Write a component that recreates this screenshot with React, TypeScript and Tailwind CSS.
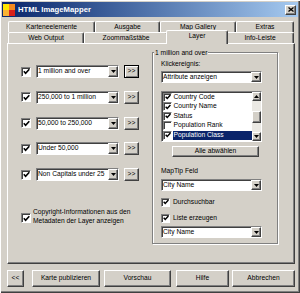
import React from "react";

const raised =
  "border border-t-white border-l-white border-r-[#404040] border-b-[#404040] shadow-[inset_-1px_-1px_0_#808080]";
const sunken =
  "border border-t-[#808080] border-l-[#808080] border-r-white border-b-white shadow-[inset_1px_1px_0_#404040]";

function CheckMark() {
  return (
    <svg width="7" height="7" viewBox="0 0 7 7">
      <path d="M0.8 3.2 L2.6 5.2 L6.3 1.2" stroke="black" strokeWidth="1.6" fill="none" />
    </svg>
  );
}

function Check({ checked = true, className = "" }: { checked?: boolean; className?: string }) {
  return (
    <div className={`w-[10px] h-[10px] shrink-0 bg-white ${sunken} flex items-center justify-center ${className}`}>
      {checked && <CheckMark />}
    </div>
  );
}

function SmallCheck({ checked = true }: { checked?: boolean }) {
  return (
    <div className={`w-[9px] h-[9px] shrink-0 bg-white ${sunken} flex items-center justify-center`}>
      {checked && (
        <svg width="6" height="6" viewBox="0 0 7 7">
          <path d="M0.8 3.2 L2.6 5.2 L6.3 1.2" stroke="black" strokeWidth="1.7" fill="none" />
        </svg>
      )}
    </div>
  );
}

function DownArrow() {
  return (
    <svg width="5" height="3" viewBox="0 0 5 3">
      <path d="M0 0h5L2.5 3z" fill="black" />
    </svg>
  );
}

function UpArrow() {
  return (
    <svg width="5" height="3" viewBox="0 0 5 3">
      <path d="M0 3h5L2.5 0z" fill="black" />
    </svg>
  );
}

function Combo({ text, className = "" }: { text: string; className?: string }) {
  return (
    <div className={`flex items-stretch bg-white ${sunken} ${className}`}>
      <div className="flex-1 min-w-0 flex items-center pl-[1px] overflow-hidden whitespace-nowrap leading-none">
        {text}
      </div>
      <div className={`w-[10px] shrink-0 bg-[#d4d0c8] ${raised} flex items-center justify-center`}>
        <DownArrow />
      </div>
    </div>
  );
}

function Btn({ children, className = "" }: { children: React.ReactNode; className?: string }) {
  return (
    <div className={`flex items-center justify-center bg-[#d4d0c8] leading-none whitespace-nowrap ${raised} ${className}`}>
      {children}
    </div>
  );
}

function Tab({ label, className = "", selected = false }: { label: string; className?: string; selected?: boolean }) {
  return (
    <div
      className={`flex items-center justify-center leading-none whitespace-nowrap bg-[#d4d0c8] border-t border-l border-r border-t-white border-l-white border-r-[#404040] rounded-t-[2px] shadow-[inset_-1px_0_0_#808080] ${
        selected ? "relative z-10 -mt-[2px] -mx-[2px] h-[14px] pb-[2px]" : "h-full"
      } ${className}`}
    >
      {label}
    </div>
  );
}

const rows = ["1 million and over", "250,000 to 1 million", "50,000 to 250,000", "Under 50,000", "Non Capitals under 25"];

const listItems = [
  { t: "Country Code", c: true },
  { t: "Country Name", c: true },
  { t: "Status", c: true },
  { t: "Population Rank", c: false },
  { t: "Population Class", c: true, sel: true },
];

export default function App() {
  return (
    <div className="w-[300px] h-[293px] bg-[#d4d0c8] text-black text-[6.7px] font-['Liberation_Sans',Arial,sans-serif] shadow-[inset_1px_1px_0_#fff,inset_-1px_-1px_0_#404040,inset_-2px_-2px_0_#808080] overflow-hidden pt-[2px]">
      {/* Title bar */}
      <div className="mx-[2px] h-[15px] bg-linear-to-r from-[#0a246a] to-[#a6caf0] flex items-center">
        <svg width="12" height="12" viewBox="0 0 12 12" className="ml-[1px] shrink-0">
          <rect x="0" y="0" width="12" height="12" fill="#e8401c" />
          <rect x="0" y="0" width="6" height="6" fill="#ffe600" />
          <rect x="6" y="0" width="6" height="6" fill="#f58a1f" />
          <rect x="0" y="6" width="6" height="6" fill="#f9b233" />
          <rect x="6" y="6" width="6" height="6" fill="#d8201a" />
        </svg>
        <span className="ml-[3px] text-white font-bold text-[7.7px] leading-none">HTML ImageMapper</span>
        <div className="flex-1" />
        <div className={`mr-[2px] w-[11px] h-[10px] bg-[#d4d0c8] ${raised} flex items-center justify-center`}>
          <svg width="6" height="5" viewBox="0 0 6 5">
            <path d="M0.5 0.5 L5.5 4.5 M5.5 0.5 L0.5 4.5" stroke="black" strokeWidth="1.3" />
          </svg>
        </div>
      </div>

      {/* Tabs row 1 */}
      <div className="mt-[4px] ml-[8px] h-[11px] flex">
        <Tab label="Karteneelemente" className="w-[87px]" />
        <Tab label="Ausgabe" className="w-[65px]" />
        <Tab label="Map Gallery" className="w-[76px]" />
        <Tab label="Extras" className="w-[58px]" />
      </div>
      {/* Tabs row 2 */}
      <div className="ml-[8px] h-[11px] flex">
        <Tab label="Web Output" className="w-[76px]" />
        <Tab label="Zoommaßstäbe" className="w-[84px]" />
        <Tab label="Layer" selected className="w-[62px]" />
        <Tab label="Info-Leiste" className="w-[68px]" />
      </div>

      {/* Panel */}
      <div className={`ml-[7px] w-[288px] h-[221px] ${raised} flex`}>
        {/* Left column */}
        <div className="w-[144px] shrink-0 pl-[13px] pt-[21px] flex flex-col">
          <div className="flex flex-col gap-[12.75px]">
            {rows.map((r, i) => (
              <div key={i} className="flex items-center h-[13px]">
                <Check />
                <Combo text={r} className="ml-[5px] w-[83px] h-[13px]" />
                {i === 0 ? (
                  <div className="ml-[5px] w-[15px] h-[13px] flex items-center justify-center leading-none border border-black shadow-[inset_1px_1px_0_#fff,inset_-1px_-1px_0_#808080]">
                    &gt;&gt;
                  </div>
                ) : (
                  <Btn className="ml-[5px] w-[15px] h-[13px]">&gt;&gt;</Btn>
                )}
              </div>
            ))}
          </div>
          <div className="mt-[26px] flex items-start">
            <Check className="mt-[6px]" />
            <div className="ml-[2px] leading-[9px] whitespace-nowrap">
              Copyright-Informationen aus den
              <br />
              Metadaten der Layer anzeigen
            </div>
          </div>
        </div>

        {/* Right group box */}
        <div className="relative mt-[8px] w-[126px] h-[192px] border border-[#808080] shadow-[inset_1px_1px_0_#fff,1px_1px_0_#fff]">
          <div className="absolute left-[1px] -top-[5px] px-[1px] bg-[#d4d0c8] leading-[9px] whitespace-nowrap">
            1 million and over
          </div>
          <div className="flex flex-col pl-[8px]">
            <div className="mt-[6px] h-[10px] flex items-center leading-none">Klickereignis:</div>
            <Combo text="Attribute anzeigen" className="mt-[2px] w-[101px] h-[12px]" />
            {/* Listbox */}
            <div className={`mt-[8px] w-[101px] h-[51px] bg-white ${sunken} flex`}>
              <div className="flex-1 min-w-0 flex flex-col pt-[0.5px]">
                {listItems.map((it) => (
                  <div key={it.t} className="h-[9.5px] flex items-center pl-[1px]">
                    <SmallCheck checked={it.c} />
                    <div
                      className={`ml-[0.5px] h-full flex-1 flex items-center pl-[1px] leading-none whitespace-nowrap ${
                        it.sel ? "bg-[#0a246a] text-white" : ""
                      }`}
                    >
                      {it.t}
                    </div>
                  </div>
                ))}
              </div>
              <div className="w-[9px] shrink-0 flex flex-col bg-[#ebe9e4]">
                <div className={`h-[9px] bg-[#d4d0c8] ${raised} flex items-center justify-center`}>
                  <UpArrow />
                </div>
                <div className="flex-1">
                  <div className={`mt-[10px] h-[12px] bg-[#d4d0c8] ${raised}`} />
                </div>
                <div className={`h-[9px] bg-[#d4d0c8] ${raised} flex items-center justify-center`}>
                  <DownArrow />
                </div>
              </div>
            </div>
            <Btn className="mt-[4px] ml-[11px] w-[87px] h-[11px]">Alle abwählen</Btn>
            <div className="mt-[9px] h-[10px] flex items-center leading-none">MapTip Feld</div>
            <Combo text="City Name" className="mt-[3px] w-[101px] h-[12px]" />
            <div className="mt-[6px] h-[10px] flex items-center">
              <SmallCheck />
              <span className="ml-[3px] leading-none">Durchsuchbar</span>
            </div>
            <div className="mt-[6px] h-[10px] flex items-center">
              <SmallCheck />
              <span className="ml-[3px] leading-none">Liste erzeugen</span>
            </div>
            <Combo text="City Name" className="mt-[3px] w-[101px] h-[12px]" />
          </div>
        </div>
      </div>

      {/* Bottom buttons */}
      <div className="mt-[6px] ml-[7px] h-[17px] flex">
        <Btn className="w-[17px] h-full">&lt;&lt;</Btn>
        <Btn className="ml-[8px] w-[68px] h-full">Karte publizieren</Btn>
        <Btn className="ml-[4px] w-[67px] h-full">Vorschau</Btn>
        <Btn className="ml-[5px] w-[53px] h-full">Hilfe</Btn>
        <Btn className="ml-[3px] w-[63px] h-full">Abbrechen</Btn>
      </div>
    </div>
  );
}
